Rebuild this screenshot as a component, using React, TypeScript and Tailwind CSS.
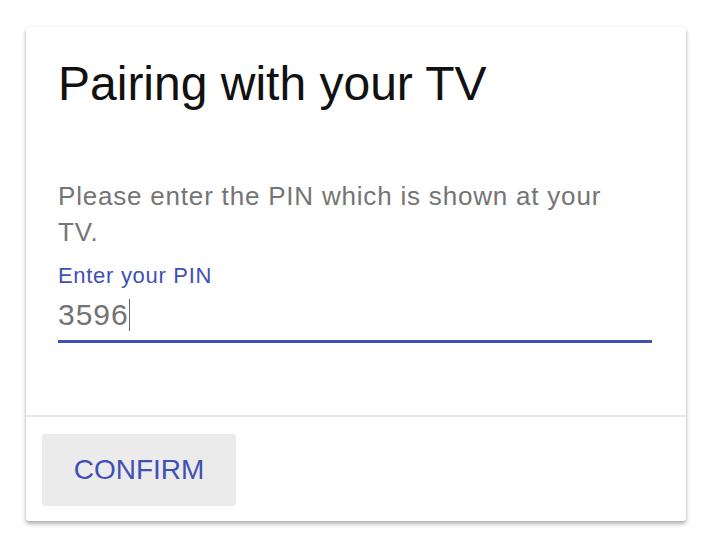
export default function App() {
  return (
    <div className="min-h-screen bg-white px-[26px] pt-[27px] font-['Liberation_Sans',Arial,sans-serif]">
      <div className="w-[660px] rounded-[3px] bg-white shadow-[0_3px_4px_rgba(0,0,0,0.3),0_0_2px_rgba(0,0,0,0.1)]">
        <div className="pl-8 pr-[34px] pt-[29px] pb-[72px]">
          <h1 className="text-[48px] leading-[56px] text-[#111]">Pairing with your TV</h1>
          <p className="mt-[66px] w-[570px] text-[26px] leading-[36px] tracking-[0.8px] text-[#757575]">
            Please enter the PIN which is shown at your TV.
          </p>
          <label className="mt-[13px] block text-[22px] leading-[26px] tracking-[0.7px] text-[#3f51b5]">
            Enter your PIN
          </label>
          <div className="mt-[9px] flex items-center border-b-[3px] border-[#3f51b5] pb-2">
            <span className="text-[30px] leading-[34px] tracking-[1px] text-[#737373]">3596</span>
            <span className="h-8 w-px bg-[#666]" />
          </div>
        </div>
        <div className="border-t-2 border-[#e6e6e6] pl-4 pt-[17px] pb-[15px]">
          <button className="flex h-[72px] w-[194px] items-center justify-center rounded-[3px] bg-[#ebebeb] text-[28px] leading-8 text-[#3f51b5]">
            CONFIRM
          </button>
        </div>
      </div>
    </div>
  );
}
